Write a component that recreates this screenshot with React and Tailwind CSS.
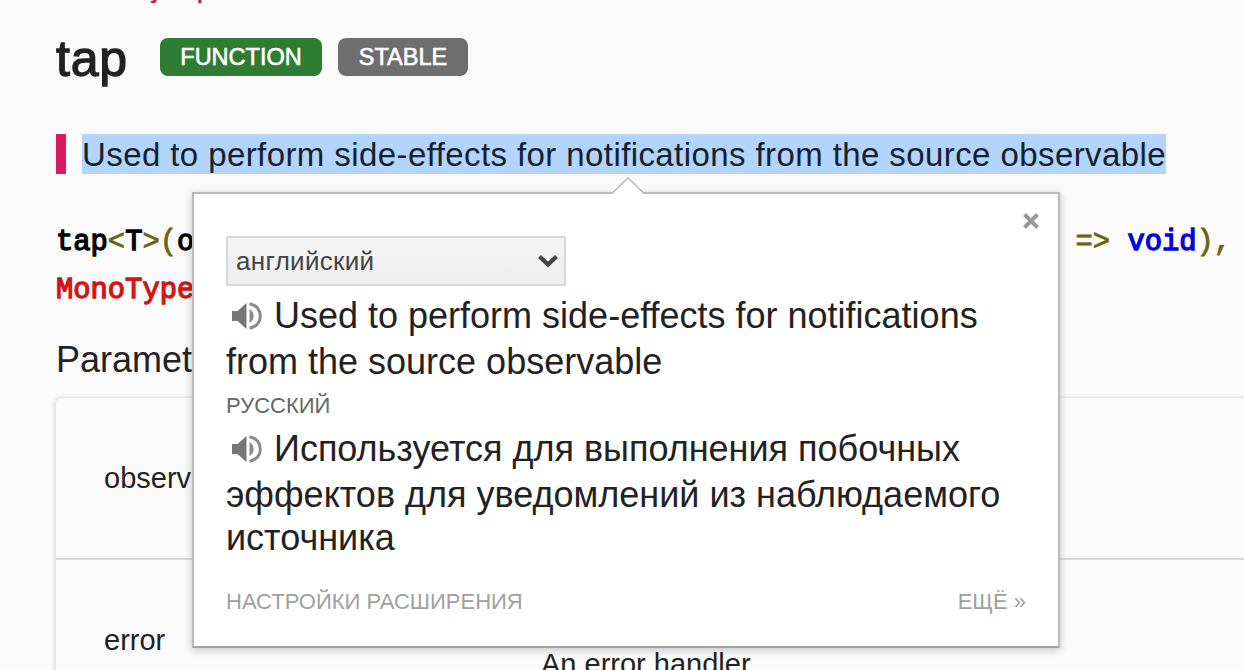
const params = [
  { name: "observerOrNext", description: "" },
  { name: "error", description: "An error handler" },
];

function Badge({ children, className }) {
  return (
    <span
      className={`flex h-[38px] items-center justify-center rounded-lg pt-px text-[23.5px] text-white [-webkit-text-stroke:0.6px_white] ${className}`}
    >
      {children}
    </span>
  );
}

function Speaker() {
  return (
    <svg className="mr-3 ml-1.5 inline-block h-[30px] w-[30px] align-[-3px]" viewBox="0 0 30 30" fill="none">
      <path d="M0 10h5.5l9-8v26l-9-8H0z" fill="#767676" />
      <path d="M17.5 8c5.5 3 5.5 11 0 14z" fill="#8a8a8a" />
      <path d="M17.5 2.8c14.5 2.5 14.5 21.9 0 24.4" stroke="#8a8a8a" strokeWidth="3" />
    </svg>
  );
}

function Op({ children }) {
  return <span className="text-[#666611] [-webkit-text-stroke:0.8px_#666611]">{children}</span>;
}

function TranslatePopup() {
  return (
    <div className="absolute top-[192px] left-[192px] h-[456px] w-[868px] border-2 border-[#bbb] border-b-[#a2a2a2] bg-white px-8 pt-[42px] text-[#222] shadow-[0_2px_8px_rgba(0,0,0,0.22)]">
      <svg className="absolute -top-[17px] left-[417px] h-[18px] w-[34px]" viewBox="0 0 34 18">
        <path d="M1 17L17 1l16 16v1H1z" fill="#fff" />
        <path d="M1 16.5L17 1l16 15.5" fill="none" stroke="#bbb" strokeWidth="1.6" />
      </svg>
      <button className="absolute top-[19px] right-[19px]">
        <svg className="h-4 w-4" viewBox="0 0 16 16" stroke="#999" strokeWidth="4">
          <path d="M1.5 1.5l13 13M14.5 1.5l-13 13" />
        </svg>
      </button>

      {/* Source language */}
      <div className="flex h-[50px] w-[340px] items-center justify-between border-2 border-[#d9d9d9] bg-linear-to-b from-[#f5f5f5] to-[#eeeeee] pr-1.5 pl-2 text-[26px] text-[#444]">
        <span className="tracking-[0.3px]">английский</span>
        <svg className="h-3.5 w-5" viewBox="0 0 20 14" fill="none" stroke="#444" strokeWidth="4.2">
          <path d="M1.5 2.5L10 10.5l8.5-8" />
        </svg>
      </div>
      <p className="mt-[7px] text-4xl leading-[46px] whitespace-nowrap">
        <Speaker />Used to perform side-effects for notifications
        <br />
        from the source observable
      </p>

      {/* Translation */}
      <p className="mt-1 text-[22px] leading-[34px] text-[#666]">РУССКИЙ</p>
      <div className="mt-0.5 text-4xl leading-[43px] whitespace-nowrap">
        <p className="leading-[48px]">
          <Speaker />Используется для выполнения побочных
        </p>
        <p>
          эффектов для уведомлений из наблюдаемого
          <br />
          источника
        </p>
      </div>

      <div className="mt-[26px] flex justify-between text-[22px] leading-[34px] text-[#a0a0a0]">
        <span>НАСТРОЙКИ РАСШИРЕНИЯ</span>
        <span>ЕЩЁ »</span>
      </div>
    </div>
  );
}

export default function App() {
  return (
    <div className="relative h-[670px] w-[1244px] overflow-hidden bg-[#fafafa] font-['Liberation_Sans',Arial,sans-serif] text-[#222]">
      <main className="-mt-[31px] pl-14">
        <nav className="h-[38px] text-[28px] leading-[38px] text-[#c2185b]">
          <span className="mr-[-5px] text-[#666]">API &gt;</span>{" "}
          <span className="tracking-[0.3px] [-webkit-text-stroke:0.5px_#c2185b]">rxjs/operators</span>
        </nav>
        <header className="mt-[22px] flex h-[56px] items-center">
          <h1 className="w-[104px] pt-1 text-[50px] leading-[48px] tracking-[0.8px] [-webkit-text-stroke:1.3px_#222]">tap</h1>
          <Badge className="w-[162px] bg-[#2e7d32]">FUNCTION</Badge>
          <Badge className="ml-4 w-[130px] bg-[#6e6e6e]">STABLE</Badge>
        </header>

        <blockquote className="mt-[49px] flex h-10 border-l-[10px] border-[#d81b60] pl-4">
          <span className="bg-[#b3d4fc] text-[33px] leading-[42px] tracking-[0.41px] whitespace-nowrap text-[#14212e]">
            Used to perform side-effects for notifications from the source observable
          </span>
        </blockquote>

        <pre className="mt-[45px] font-['Liberation_Mono',monospace] text-[28.8px] leading-[48px] text-black [-webkit-text-stroke:1.3px_black]">
          tap<Op>&lt;</Op>T<Op>&gt;(</Op>observerOrNext<Op>?:</Op> Partial<Op>&lt;</Op>Observer<Op>&lt;</Op>T
          <Op>&gt;&gt;</Op> <Op>|</Op> <Op>((</Op>value<Op>:</Op> T<Op>)</Op> <Op>=&gt;</Op>{" "}
          <span className="text-[#0000e0] [-webkit-text-stroke-color:#0000e0]">void</span>
          <Op>),</Op>
          {"\n"}
          <span className="text-[#d01616] [-webkit-text-stroke-color:#d01616]">MonoTypeOperatorFunction</span>
          <Op>&lt;</Op>T<Op>&gt;</Op>
        </pre>

        <h2 className="mt-[22px] text-4xl leading-[46px]">Parameters</h2>
        <div className="mt-3.5 -ml-px rounded-tl-md border border-r-0 border-[#e6e6e6] text-[29px] shadow-[0_1px_4px_rgba(0,0,0,0.2)]">
          {params.map((p) => (
            <div key={p.name} className="flex h-[162px] items-center border-b-2 border-[#d8d8d8] pt-0.5 pl-12">
              <span className="w-[437px]">{p.name}</span>
              <span className="relative top-6">{p.description}</span>
            </div>
          ))}
        </div>
      </main>
      <TranslatePopup />
    </div>
  );
}
